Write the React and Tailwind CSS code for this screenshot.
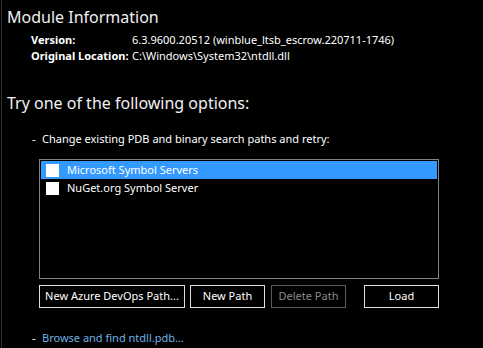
export default function App() {
  const font = { fontFamily: '"Noto Sans", "Open Sans", sans-serif' };
  return (
    <div className="w-[483px] h-[348px] bg-black text-white overflow-hidden flex" style={font}>
      <div className="w-[1px] shrink-0" />
      <div className="w-[1px] shrink-0 bg-[#2e2e2e]" />
      <div className="flex-1 flex flex-col">
        <div className="pl-[5px] pt-[5px] text-[16px] leading-[24px] text-[#f0f0f0] whitespace-nowrap">Module Information</div>
        <div className="pl-[29px] pt-[3px] text-[11px] leading-[16px] grid grid-cols-[101px_1fr] whitespace-nowrap">
          <div className="font-bold">Version:</div>
          <div>6.3.9600.20512 (winblue_ltsb_escrow.220711-1746)</div>
          <div className="font-bold">Original Location:</div>
          <div>C:\Windows\System32\ntdll.dll</div>
        </div>
        <div className="pl-[5px] pt-[27px] text-[16px] leading-[24px] text-[#f0f0f0] whitespace-nowrap">Try one of the following options:</div>
        <div className="pl-[30px] pt-[16px] text-[11px] leading-[16px] flex whitespace-nowrap">
          <span className="w-[10px]">-</span>
          <span>Change existing PDB and binary search paths and retry:</span>
        </div>
        <div className="ml-[37px] mt-[12px] w-[400px] h-[120px] border border-[#828282] p-[1px] text-[11px] whitespace-nowrap">
          <div className="h-[18px] bg-[#3399ff] flex items-center pl-[5px] gap-[8px]">
            <div className="w-[13px] h-[13px] bg-white" />
            <span>Microsoft Symbol Servers</span>
          </div>
          <div className="h-[19px] flex items-center pl-[5px] gap-[8px]">
            <div className="w-[13px] h-[13px] bg-white" />
            <span>NuGet.org Symbol Server</span>
          </div>
        </div>
        <div className="ml-[37px] mt-[6px] flex text-[11px] h-[23px] whitespace-nowrap">
          <div className="w-[146px] border border-[#e0e0e0] flex items-center justify-center">New Azure DevOps Path...</div>
          <div className="ml-[5px] w-[75px] border border-[#e0e0e0] flex items-center justify-center">New Path</div>
          <div className="ml-[6px] w-[75px] border border-[#5a5a5a] text-[#8a8a8a] flex items-center justify-center">Delete Path</div>
          <div className="ml-[18px] w-[75px] border border-[#e0e0e0] flex items-center justify-center">Load</div>
        </div>
        <div className="pl-[30px] pt-[22px] text-[11px] leading-[16px] flex whitespace-nowrap">
          <span className="w-[10px]">-</span>
          <span className="text-[#6fb0e0]">Browse and find ntdll.pdb...</span>
        </div>
      </div>
    </div>
  );
}
